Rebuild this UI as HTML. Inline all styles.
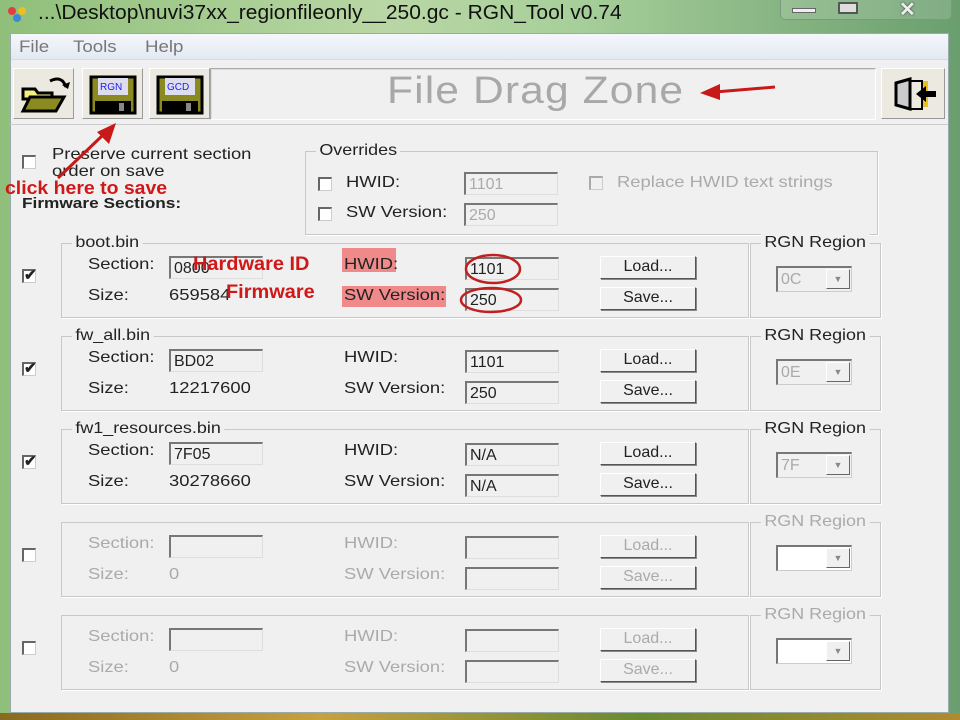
<!DOCTYPE html>
<html><head><meta charset="utf-8">
<style>
*{margin:0;padding:0;box-sizing:border-box}
body{width:960px;height:720px;overflow:hidden;position:relative;font-family:"Liberation Sans",sans-serif;font-size:16px;color:#222;
background:linear-gradient(90deg,#8fbf7a 0,#b9d7a4 40%,#a7cf9a 60%,#6a9e6e 100%)}
.a{position:absolute}
.t{position:absolute;white-space:nowrap;transform:scaleX(1.15);transform-origin:left}
.win{left:10px;top:33px;width:939px;height:680px;background:#f0f0f0;border:1px solid #9aa;}
.menu{left:11px;top:34px;width:937px;height:26px;background:linear-gradient(#f4f7fb,#e3e9f3);border-bottom:1px solid #d6dbe3}
.menu span{position:absolute;top:3px;color:#777;font-size:17px;transform:scaleX(1.1);transform-origin:left}
.tb{width:61px;height:51px;background:#ebe9e0;border:1px solid;border-color:#fff #999 #999 #fff}
.gb{border:1px solid #c8c8c8;box-shadow:1px 1px 0 #fff}
.lg{background:#f0f0f0;padding:0 3px;position:absolute;top:-10px;font-size:16px;white-space:nowrap;transform:scaleX(1.12);transform-origin:left}
.inp{position:absolute;background:#f0f0f0;border:1px solid #ddd;border-top:2px solid #777;border-left:2px solid #777;height:23px;font-size:16px;padding:2px 0 0 3px;white-space:nowrap}
.btn{position:absolute;width:96px;height:23px;border:1px solid;border-color:#fff #555 #555 #fff;box-shadow:1px 1px 0 #888;text-align:center;font-size:16px;line-height:20px;background:#f0f0f0}
.cb{position:absolute;width:14px;height:14px;background:#fff;border:1px solid #ccc;border-top:2px solid #666;border-left:2px solid #666}
.dis{color:#aaa}
.combo{position:absolute;width:76px;height:26px;background:#fff;border:1px solid #ccc;border-top:2px solid #777;border-left:2px solid #777;font-size:16px;color:#aaa;padding:3px 0 0 3px}
.combo i{position:absolute;right:1px;top:1px;width:24px;height:20px;border:1px solid;border-color:#fff #666 #666 #fff;background:#f0f0f0;font-style:normal;font-size:9px;text-align:center;line-height:18px;color:#888}
</style></head><body>
<div class="a" style="left:6px;top:5px;width:22px;height:18px">
<svg width="22" height="18"><circle cx="6" cy="6" r="4" fill="#e04040"/><circle cx="16" cy="6" r="4" fill="#e8c020"/><circle cx="11" cy="13" r="4" fill="#3a8ad8"/></svg></div>
<div class="t" style="left:38px;top:2px;font-size:20px;color:#111;transform:scaleX(1.05)">...\Desktop\nuvi37xx_regionfileonly__250.gc - RGN_Tool v0.74</div>
<div class="a" style="left:780px;top:-2px;width:172px;height:22px;border:1px solid #7a9a80;border-radius:0 0 5px 5px;background:rgba(255,255,255,.15)"></div>
<div class="a" style="left:792px;top:8px;width:24px;height:5px;background:#eee;border:1px solid #666"></div>
<div class="a" style="left:838px;top:2px;width:20px;height:12px;border:2px solid #555;background:#ddd"></div>
<div class="a" style="left:899px;top:-3px;font-size:20px;color:#eee;font-weight:bold;text-shadow:0 0 2px #333">✕</div>

<div class="a win"></div>
<div class="a menu"><span style="left:8px">File</span><span style="left:62px">Tools</span><span style="left:134px">Help</span></div>

<div class="a tb" style="left:13px;top:68px">
<svg width="59" height="49"><path d="M9 20h12l3 4h14v6H9z" fill="#f4f080" stroke="#000" stroke-width="3"/><path d="M9 42l7-14h34l-8 14z" fill="#8a8a20" stroke="#000" stroke-width="3"/><path d="M36 12q12-6 16 6" fill="none" stroke="#000" stroke-width="3"/><path d="M48 16l6 4 2-7z" fill="#000"/></svg></div>
<div class="a tb" style="left:82px;top:68px">
<svg width="59" height="49"><rect x="8" y="8" width="44" height="36" fill="#8a8a20" stroke="#000" stroke-width="3"/><rect x="15" y="9" width="30" height="17" fill="#dde"/><text x="17" y="21" font-size="10" fill="#22e" font-family="Liberation Sans">RGN</text><rect x="12" y="32" width="36" height="12" fill="#000"/><rect x="36" y="34" width="5" height="8" fill="#888"/></svg></div>
<div class="a tb" style="left:149px;top:68px">
<svg width="59" height="49"><rect x="8" y="8" width="44" height="36" fill="#8a8a20" stroke="#000" stroke-width="3"/><rect x="15" y="9" width="30" height="17" fill="#dde"/><text x="17" y="21" font-size="10" fill="#22e" font-family="Liberation Sans">GCD</text><rect x="12" y="32" width="36" height="12" fill="#000"/><rect x="36" y="34" width="5" height="8" fill="#888"/></svg></div>
<div class="a" style="left:210px;top:68px;width:666px;height:52px;border:1px solid #aaa;border-right-color:#fff;border-bottom-color:#fff;box-shadow:inset 1px 1px 0 #ddd"></div>
<div class="t" style="left:387px;top:70px;font-size:38px;color:#a8a8a8;letter-spacing:1px;transform:scaleX(1.12)">File Drag Zone</div>
<div class="a tb" style="left:881px;top:68px;width:64px">
<svg width="62" height="49"><path d="M40 12h6v26h-6z" fill="#e8c020"/><path d="M14 14l14-4v30l-14-4z" fill="#ccc" stroke="#000" stroke-width="3"/><path d="M28 12h12v28H28" fill="none" stroke="#000" stroke-width="2"/><path d="M34 25l10-8v5h10v6H44v5z" fill="#000"/></svg></div>
<div class="a" style="left:10px;top:124px;width:938px;height:1px;background:#ccc"></div>

<div class="cb" style="left:22px;top:155px"></div>
<div class="t" style="left:52px;top:146px">Preserve current section</div>
<div class="t" style="left:52px;top:163px">order on save</div>
<div class="t" style="left:5px;top:178px;font-size:18px;font-weight:bold;color:#d01818;transform:scaleX(1.08)">click here to save</div>
<div class="t" style="left:22px;top:195px;font-weight:bold;font-size:15px">Firmware Sections:</div>

<div class="a gb" style="left:305px;top:151px;width:573px;height:84px"><span class="lg" style="left:10px">Overrides</span></div>
<div class="cb" style="left:318px;top:177px"></div><div class="t" style="left:346px;top:174px">HWID:</div>
<div class="inp dis" style="left:464px;top:172px;width:94px">1101</div>
<div class="cb" style="left:318px;top:207px"></div><div class="t" style="left:346px;top:204px">SW Version:</div>
<div class="inp dis" style="left:464px;top:203px;width:94px">250</div>
<div class="cb" style="left:589px;top:176px;background:#f0f0f0;border-color:#ccc;border-top-color:#aaa;border-left-color:#aaa"></div>
<div class="t dis" style="left:617px;top:174px">Replace HWID text strings</div>

<div id="secs"></div>
<script>
var d=[["boot.bin","0800","659584","1101","250","0C",1],["fw_all.bin","BD02","12217600","1101","250","0E",1],["fw1_resources.bin","7F05","30278660","N/A","N/A","7F",1],["","","0","","","",0],["","","0","","","",0]];
var h="";
for(var i=0;i<5;i++){var y=243+i*93,s=d[i],e=s[6],c=e?"":" dis";
h+='<div class="a gb" style="left:61px;top:'+y+'px;width:688px;height:75px">'+(s[0]?'<span class="lg" style="left:10px">'+s[0]+'</span>':'')+'</div>';
h+='<div class="a gb" style="left:750px;top:'+y+'px;width:131px;height:75px"><span class="lg'+c+'" style="left:10px">RGN Region</span></div>';
h+='<div class="cb" style="left:22px;top:'+(y+26)+'px;font-size:15px;line-height:10px;font-weight:bold">'+(e?'✔':'')+'</div>';
h+='<div class="t'+c+'" style="left:88px;top:'+(y+13)+'px">Section:</div>';
h+='<div class="inp" style="left:169px;top:'+(y+13)+'px;width:94px">'+s[1]+'</div>';
h+='<div class="t'+c+'" style="left:88px;top:'+(y+44)+'px">Size:</div>';
h+='<div class="t'+c+'" style="left:169px;top:'+(y+44)+'px">'+s[2]+'</div>';
h+='<div class="t'+c+'" style="left:344px;top:'+(y+13)+'px">HWID:</div>';
h+='<div class="inp" style="left:465px;top:'+(y+14)+'px;width:94px">'+s[3]+'</div>';
h+='<div class="t'+c+'" style="left:344px;top:'+(y+44)+'px">SW Version:</div>';
h+='<div class="inp" style="left:465px;top:'+(y+45)+'px;width:94px">'+s[4]+'</div>';
h+='<div class="btn'+c+'" style="left:600px;top:'+(y+13)+'px">Load...</div>';
h+='<div class="btn'+c+'" style="left:600px;top:'+(y+44)+'px">Save...</div>';
h+='<div class="combo" style="left:776px;top:'+(y+23)+'px'+(e?';background:#f0f0f0':'')+'">'+s[5]+'<i>▼</i></div>';
}
document.getElementById("secs").innerHTML=h;
</script>

<div class="a" style="left:342px;top:248px;width:54px;height:24px;background:#f08a8a"></div>
<div class="a" style="left:342px;top:286px;width:104px;height:21px;background:#f08a8a"></div>
<div class="t" style="left:344px;top:256px">HWID:</div>
<div class="t" style="left:344px;top:287px">SW Version:</div>
<div class="t" style="left:193px;top:254px;font-size:19px;font-weight:bold;color:#d01818;transform:scaleX(1.05)">Hardware ID</div>
<div class="t" style="left:226px;top:282px;font-size:19px;font-weight:bold;color:#d01818;transform:scaleX(1.05)">Firmware</div>
<svg class="a" style="left:0;top:0" width="960" height="720">
<ellipse cx="493" cy="269" rx="27" ry="14" fill="none" stroke="#c02020" stroke-width="2.5"/>
<ellipse cx="491" cy="300" rx="30" ry="12" fill="none" stroke="#c02020" stroke-width="2.5"/>
<line x1="775" y1="87" x2="715" y2="92" stroke="#c81818" stroke-width="3"/>
<path d="M700 93l20-9v16z" fill="#c81818"/>
<line x1="58" y1="178" x2="103" y2="135" stroke="#c81818" stroke-width="3"/>
<path d="M116 123l-7 21-12-12z" fill="#c81818"/>
</svg>
<div class="a" style="left:0;top:713px;width:960px;height:7px;background:linear-gradient(90deg,#8a6a20,#c8a040,#6a8a30,#b08a30)"></div>
</body></html>
